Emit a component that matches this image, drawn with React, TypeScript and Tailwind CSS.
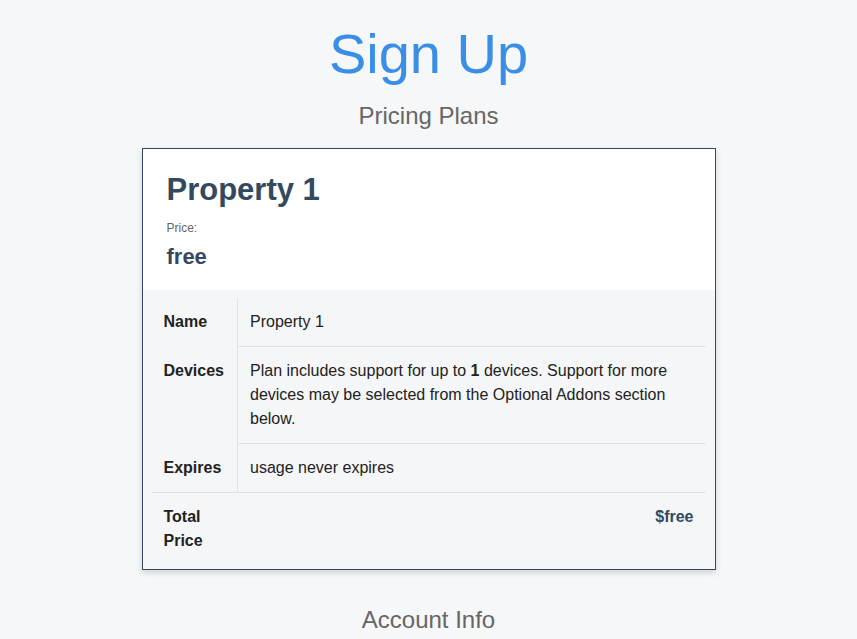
export default function App() {
  const rows = [
    { label: "Name", value: <>Property 1</> },
    {
      label: "Devices",
      value: (
        <>
          Plan includes support for up to <b>1</b> devices. Support for more devices may be selected from the Optional
          Addons section below.
        </>
      ),
    },
    { label: "Expires", value: <>usage never expires</> },
  ];

  return (
    <div className="min-h-screen bg-[#f6f7f9] font-['Liberation_Sans',Arial,sans-serif] flex flex-col items-center">
      <h1 className="mt-[18px] text-[56px] leading-[72px] text-[#3a8ee6]">Sign Up</h1>
      <h2 className="mt-[11px] text-[24px] leading-[30px] text-[#666]">Pricing Plans</h2>

      <div className="mt-[17px] w-[574px] border border-[#34495e] bg-[#f5f6f8] shadow-[0_3px_6px_rgba(0,0,0,0.15)]">
        <div className="bg-white px-6 pt-[21px] pb-[19px]">
          <div className="text-[31px] leading-[40px] font-bold text-[#34495e]">Property 1</div>
          <div className="mt-[10px] text-[12px] leading-[16px] text-[#666]">Price:</div>
          <div className="mt-[7px] text-[22px] leading-[28px] font-bold text-[#34495e]">free</div>
        </div>

        <div className="pt-2 px-[9px] pb-[4px]">
          <table className="w-full border-collapse text-[16px] leading-[24px] text-[#222]">
            <tbody>
              {rows.map((r, i) => (
                <tr key={r.label}>
                  <th className="w-[86px] px-3 py-3 text-left align-top font-bold border-r border-[#dfe2e6]">
                    {r.label}
                  </th>
                  <td
                    className={
                      "px-3 py-3 align-top " + (i < rows.length - 1 ? "border-b border-[#dfe2e6]" : "")
                    }
                  >
                    {r.value}
                  </td>
                </tr>
              ))}
              <tr className="border-t border-[#dfe2e6]">
                <th className="w-[86px] px-3 py-3 text-left align-top font-bold">Total Price</th>
                <td className="px-3 py-3 text-right align-top font-bold text-[#34495e]">$free</td>
              </tr>
            </tbody>
          </table>
        </div>
      </div>

      <h2 className="mt-[35px] text-[24px] leading-[30px] text-[#666]">Account Info</h2>
    </div>
  );
}
